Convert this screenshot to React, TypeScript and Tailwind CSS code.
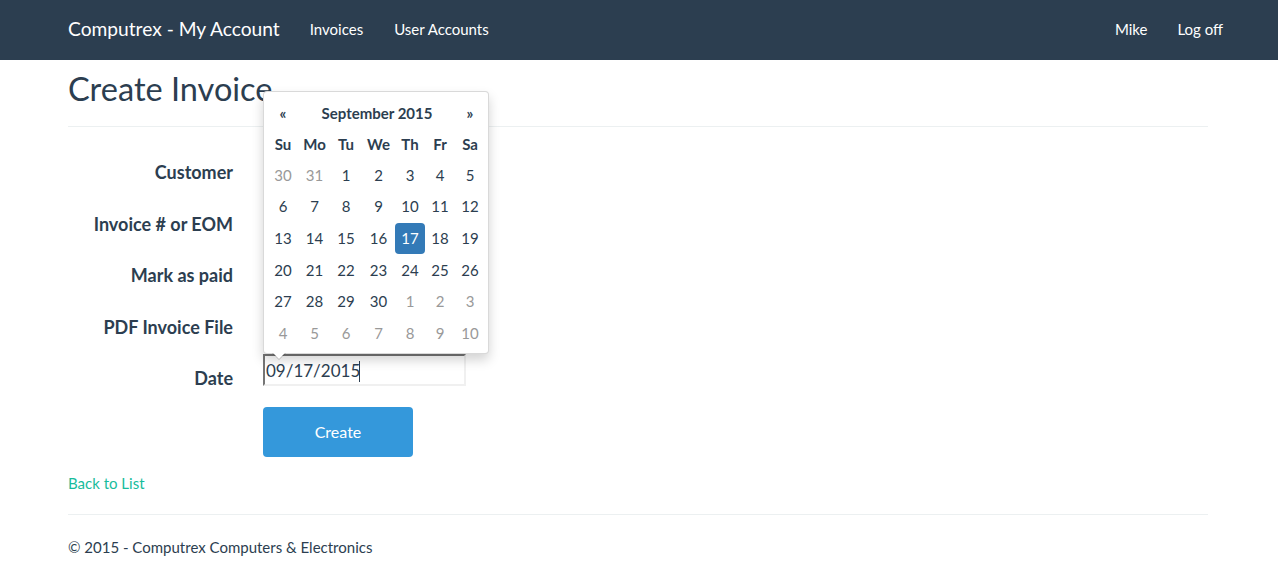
import React from 'react';

const font = { fontFamily: 'Lato, "Liberation Sans", sans-serif' };

type Day = { n: number; muted?: boolean; active?: boolean };

const weeks: Day[][] = [
  [{ n: 30, muted: true }, { n: 31, muted: true }, { n: 1 }, { n: 2 }, { n: 3 }, { n: 4 }, { n: 5 }],
  [{ n: 6 }, { n: 7 }, { n: 8 }, { n: 9 }, { n: 10 }, { n: 11 }, { n: 12 }],
  [{ n: 13 }, { n: 14 }, { n: 15 }, { n: 16 }, { n: 17, active: true }, { n: 18 }, { n: 19 }],
  [{ n: 20 }, { n: 21 }, { n: 22 }, { n: 23 }, { n: 24 }, { n: 25 }, { n: 26 }],
  [{ n: 27 }, { n: 28 }, { n: 29 }, { n: 30 }, { n: 1, muted: true }, { n: 2, muted: true }, { n: 3, muted: true }],
  [{ n: 4, muted: true }, { n: 5, muted: true }, { n: 6, muted: true }, { n: 7, muted: true }, { n: 8, muted: true }, { n: 9, muted: true }, { n: 10, muted: true }],
];

const dow = ['Su', 'Mo', 'Tu', 'We', 'Th', 'Fr', 'Sa'];

// column widths follow the auto table layout of the datepicker
const cols = 'grid grid-cols-[32px_31px_32px_33px_30px_30px_30px]';

function DatePicker() {
  return (
    <div className="absolute left-0 bottom-full z-10 w-[226px] rounded-[4px] border border-black/15 bg-white py-[4px] pl-[3px] pr-[5px] shadow-[0_6px_12px_rgba(0,0,0,0.175)]">
      <div className={`${cols} h-[34px] items-center text-[15px] font-bold text-[#2c3e50]`}>
        <span className="text-center">«</span>
        <span className="col-span-5 text-center">September 2015</span>
        <span className="text-center">»</span>
      </div>
      <div className={`${cols} h-[29px] items-center text-[15px] font-bold text-[#2c3e50]`}>
        {dow.map((d) => (
          <span key={d} className="text-center">{d}</span>
        ))}
      </div>
      {weeks.map((w, i) => (
        <div key={i} className={`${cols} h-[31.67px] items-center text-[15px]`}>
          {w.map((d, j) => (
            <span
              key={j}
              className={
                d.active
                  ? 'mx-auto flex h-[31px] w-[30px] items-center justify-center rounded-[4px] bg-[#337ab7] text-white'
                  : d.muted
                  ? 'text-center text-[#999]'
                  : 'text-center text-[#2c3e50]'
              }
            >
              {d.n}
            </span>
          ))}
        </div>
      ))}
      {/* arrow */}
      <div className="absolute left-[8px] top-full h-0 w-0 border-x-[7px] border-t-[7px] border-x-transparent border-t-black/20" />
      <div className="absolute left-[9px] top-full h-0 w-0 border-x-[6px] border-t-[6px] border-x-transparent border-t-white" />
    </div>
  );
}

const inset = 'border-2 border-t-[#767676] border-l-[#767676] border-b-[#f0f0f0] border-r-[#f0f0f0]';

function Row({ label, h, children }: { label: string; h: string; children?: React.ReactNode }) {
  return (
    <div className={`flex ${h}`}>
      <label className="w-[165px] shrink-0 pt-[13px] text-right text-[18px] font-bold leading-[22px] text-[#2c3e50]">
        {label}
      </label>
      <div className="relative ml-[30px]">{children}</div>
    </div>
  );
}

export default function App() {
  return (
    <div className="min-h-screen bg-white text-[#2c3e50]" style={font}>
      <nav className="h-[60px] bg-[#2c3e50] text-white">
        <div className="ml-[68px] flex h-full w-[1155px] items-center pb-[2px]">
          <span className="text-[19.2px]">Computrex - My Account</span>
          <span className="ml-[30px] text-[15px]">Invoices</span>
          <span className="ml-[31px] text-[15px]">User Accounts</span>
          <span className="ml-auto text-[15px]">Mike</span>
          <span className="ml-[30px] text-[15px]">Log off</span>
        </div>
      </nav>

      <main className="ml-[68px] w-[1140px]">
        <h2 className="pt-[8px] text-[32.5px] leading-[42px]">Create Invoice</h2>
        <hr className="mt-[16px] border-t border-[#ecf0f1]" />

        <form className="pt-[21px]">
          <Row label="Customer" h="h-[52px]">
            <input className={`h-[32px] w-[203px] ${inset} bg-white`} />
          </Row>
          <Row label="Invoice # or EOM" h="h-[51px]">
            <input className={`h-[30px] w-[203px] ${inset} bg-white`} />
          </Row>
          <Row label="Mark as paid" h="h-[52px]">
            <input type="checkbox" className="mt-[6px] h-[13px] w-[13px]" />
          </Row>
          <Row label="PDF Invoice File" h="h-[51px]" />
          <Row label="Date" h="h-[53px]">
            <div className="relative">
              <DatePicker />
              <input
                defaultValue="09/17/2015"
                className={`h-[32px] w-[203px] ${inset} bg-white px-[1px] text-[17px] text-[#2c3e50] outline-none`}
                style={font}
              />
              {/* text caret */}
              <span className="absolute left-[96px] top-[7px] h-[21px] w-px bg-[#2c3e50]" />
            </div>
          </Row>
          <div className="ml-[195px]">
            <button
              type="button"
              className="h-[50px] w-[150px] rounded-[4px] bg-[#3498db] text-[16px] text-white"
            >
              Create
            </button>
          </div>
        </form>

        <a className="mt-[15px] block w-fit text-[15px] leading-[22px] text-[#18bc9c]">Back to List</a>
        <hr className="mt-[20px] border-t border-[#ecf0f1]" />
        <footer className="pt-[21px] text-[15px] leading-[22px]">© 2015 - Computrex Computers &amp; Electronics</footer>
      </main>
    </div>
  );
}
